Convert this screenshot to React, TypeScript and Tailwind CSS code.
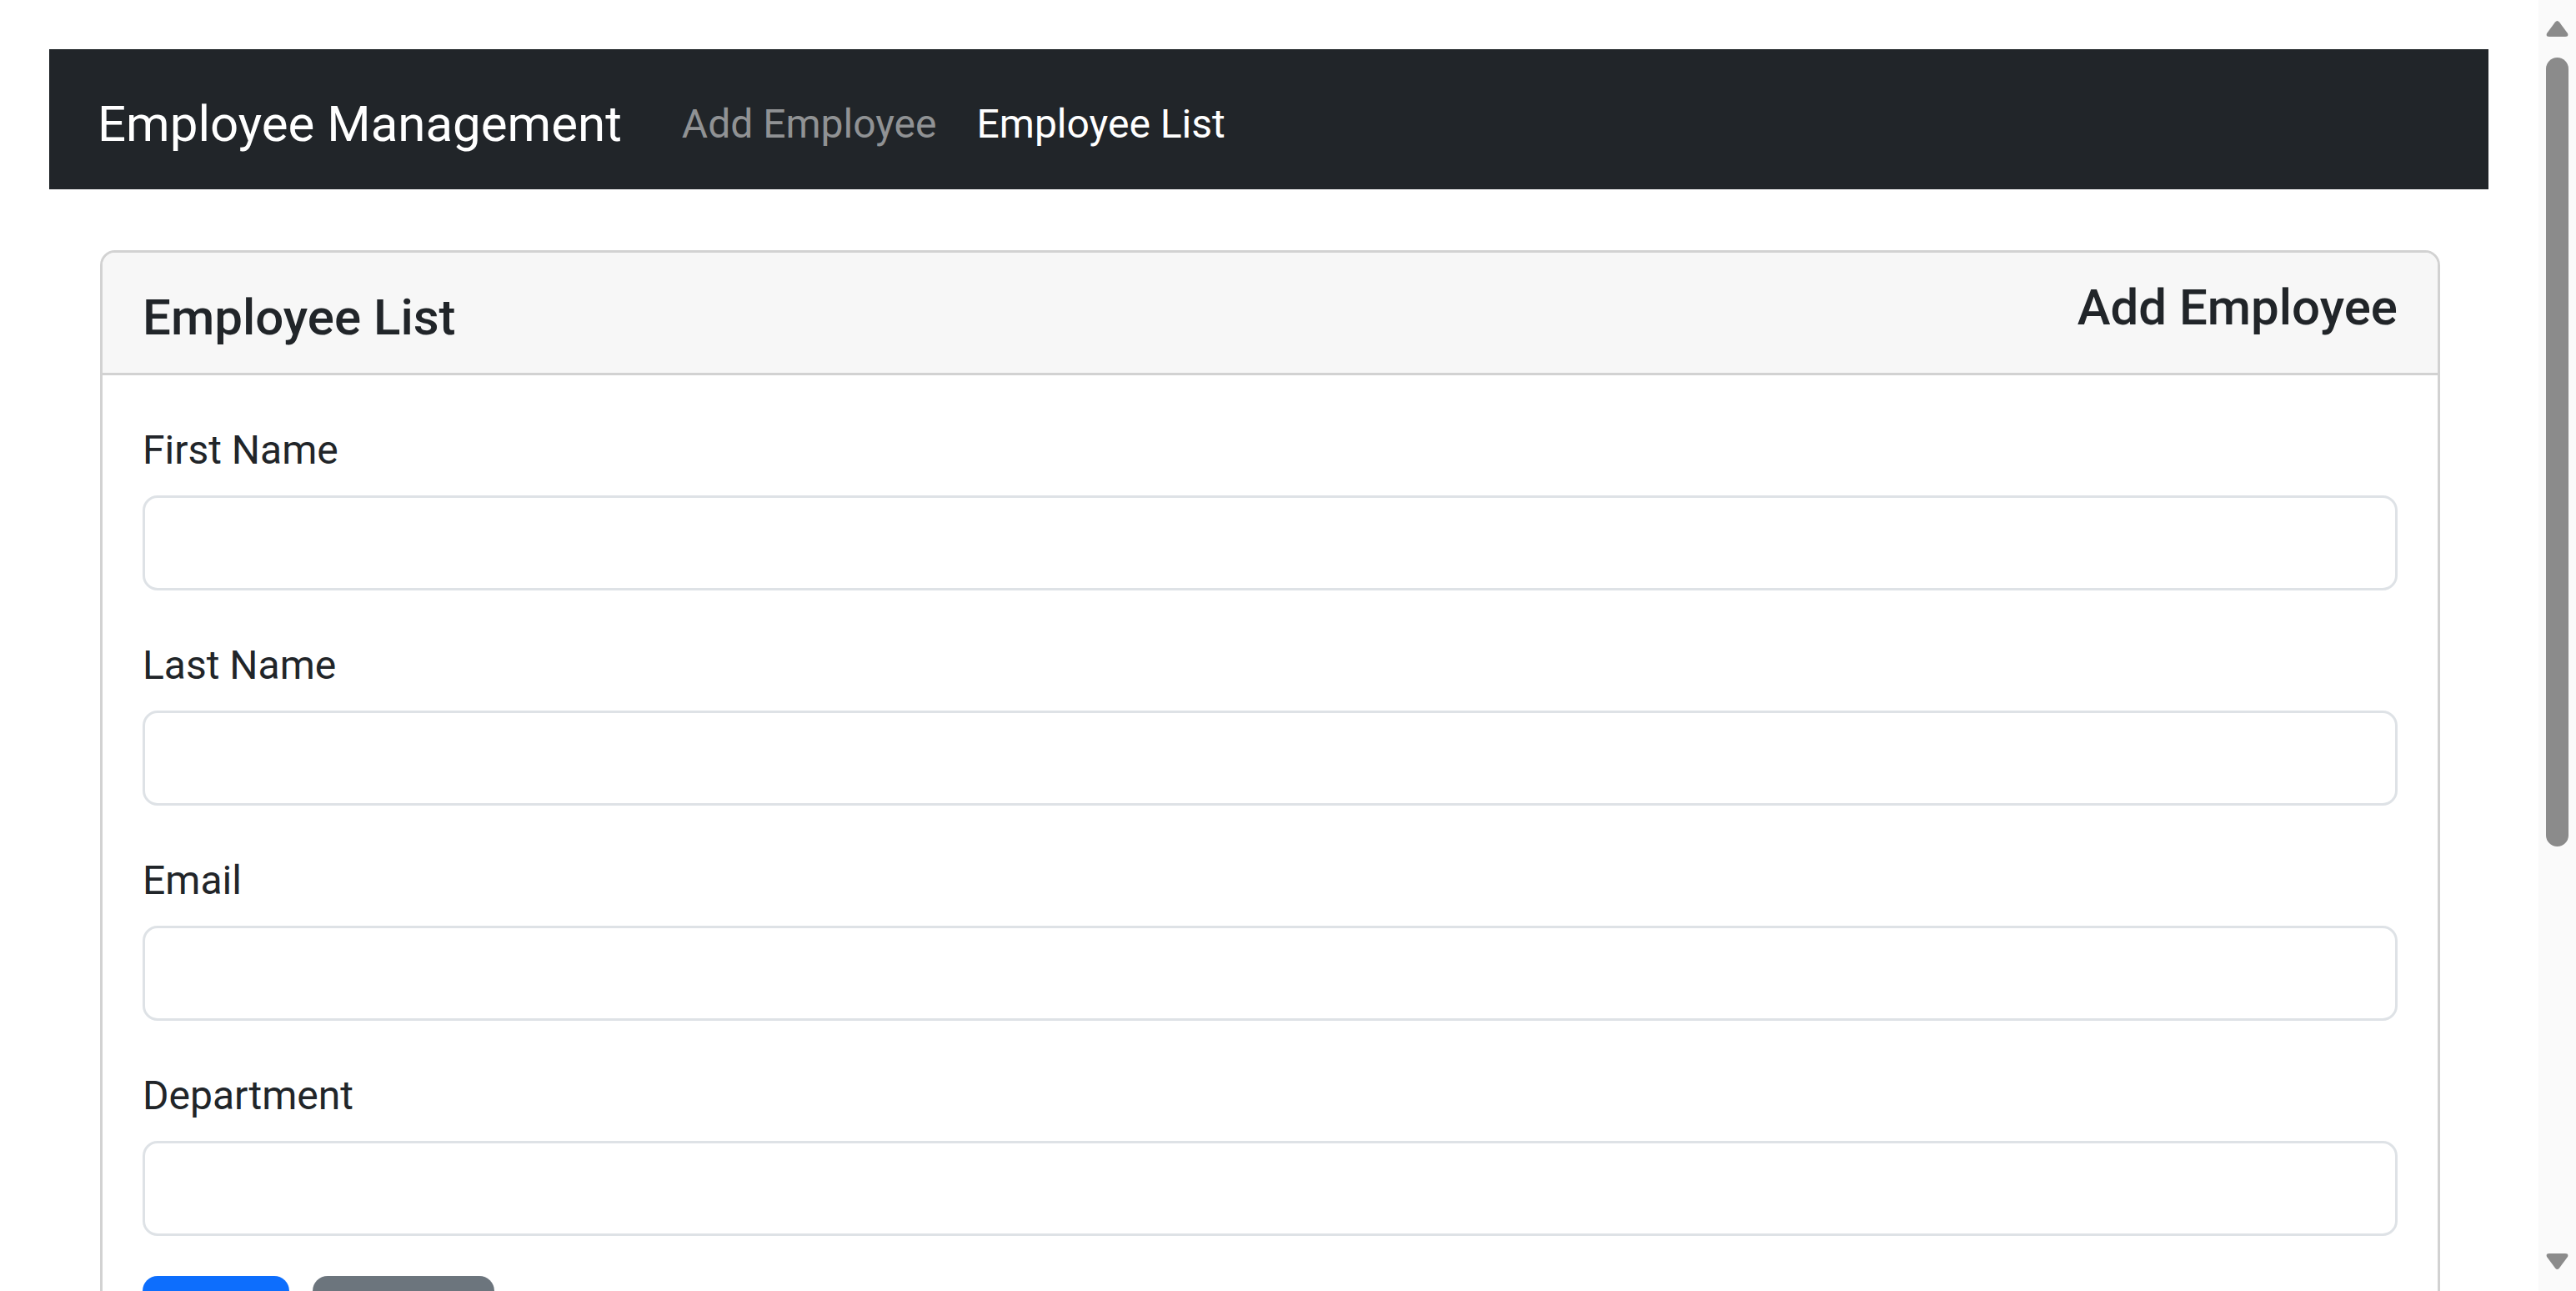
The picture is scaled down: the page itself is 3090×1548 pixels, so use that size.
import { useState } from "react";

const fields = [
  { id: "firstName", label: "First Name" },
  { id: "lastName", label: "Last Name" },
  { id: "email", label: "Email" },
  { id: "department", label: "Department" },
];

const Navbar = () => {
  return (
    <nav className="flex h-[168px] items-center bg-[#212529] pl-[58px]">
      <a href="#" className="mr-[48px] pt-[12px] text-[60px] leading-[78px] text-white">
        Employee Management
      </a>
      <a href="#" className="px-[24px] pt-[12px] text-[48px] leading-[60px] text-[#909294]">
        Add Employee
      </a>
      <a href="#" className="px-[24px] pt-[12px] text-[48px] leading-[60px] text-white">
        Employee List
      </a>
    </nav>
  );
};

const ScrollBar = () => {
  return (
    <div className="flex h-full w-[45px] shrink-0 flex-col items-center bg-[#fafafa]">
      <svg width="27" height="20" viewBox="0 0 27 20" className="mt-[24px]">
        <path d="M11 2.5 Q13.5 -0.5 16 2.5 L26 16 Q27.5 20 23 20 L4 20 Q-0.5 20 1 16 Z" fill="#8b8b8b" />
      </svg>
      <div className="mt-[25px] h-[946px] w-[27px] rounded-full bg-[#8b8b8b]" />
      <div className="flex-1" />
      <svg width="27" height="20" viewBox="0 0 27 20" className="mb-[25px]">
        <path d="M11 17.5 Q13.5 20.5 16 17.5 L26 4 Q27.5 0 23 0 L4 0 Q-0.5 0 1 4 Z" fill="#8b8b8b" />
      </svg>
    </div>
  );
};

export default function App() {
  const [form, setForm] = useState<Record<string, string>>({
    firstName: "",
    lastName: "",
    email: "",
    department: "",
  });

  return (
    <div
      className="flex h-screen w-full overflow-hidden bg-white text-[#212529]"
      style={{ fontFamily: "Roboto, 'Noto Sans', sans-serif" }}
    >
      <div className="flex-1 overflow-hidden pl-[59px] pr-[60px] pt-[59px]">
        <Navbar />
        <div className="ml-[61px] mr-[58px] mt-[73px] rounded-[18px] border-[3px] border-[#d2d2d2]">
          <div className="flex items-start justify-between rounded-t-[15px] border-b-[3px] border-[#d2d2d2] bg-[#f7f7f7] px-[48px] py-[24px]">
            <h5 className="pt-[18px] text-[60px] font-medium leading-[72px]">Employee List</h5>
            <h5 className="mb-[18px] pt-[6px] text-[60px] font-medium leading-[72px]">Add Employee</h5>
          </div>
          <form className="p-[48px]" onSubmit={(e) => e.preventDefault()}>
            {fields.map((f) => (
              <div key={f.id} className="mb-[48px]">
                <label htmlFor={f.id} className="mb-[18px] block pt-[6px] text-[48px] leading-[72px]">
                  {f.label}
                </label>
                <input
                  id={f.id}
                  type="text"
                  value={form[f.id]}
                  onChange={(e) => setForm({ ...form, [f.id]: e.target.value })}
                  className="block h-[114px] w-full rounded-[18px] border-[3px] border-[#dee2e6] px-[36px] text-[48px] outline-none"
                />
              </div>
            ))}
            <div className="flex gap-[28px]">
              <button type="submit" className="h-[114px] w-[176px] rounded-[18px] bg-[#0d6efd] text-[48px] text-white">
                Save
              </button>
              <button type="button" className="h-[114px] w-[218px] rounded-[18px] bg-[#6c757d] text-[48px] text-white">
                Cancel
              </button>
            </div>
          </form>
        </div>
      </div>
      <ScrollBar />
    </div>
  );
}
